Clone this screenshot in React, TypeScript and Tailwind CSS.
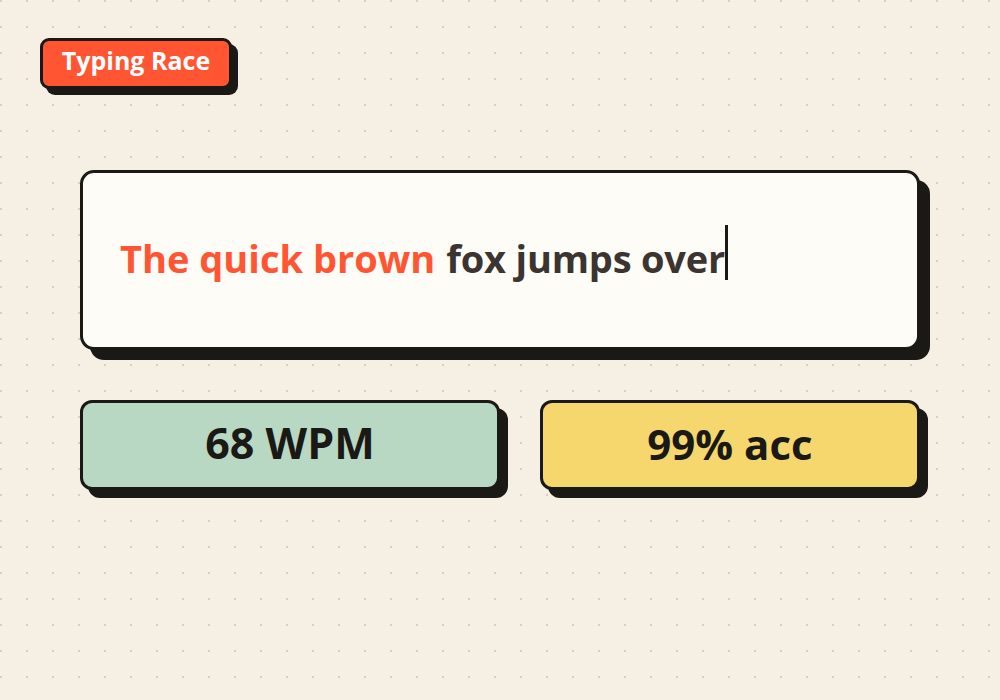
import React from 'react';

const font = { fontFamily: '"Open Sans", "Noto Sans", sans-serif' };

export default function App() {
  return (
    <div
      className="w-[1000px] h-[700px] bg-[#f5efe4] bg-[radial-gradient(circle_at_1px_1px,#d8cfc0_1px,transparent_0)] bg-[length:26px_26px] px-10 pt-[38px]"
      style={font}
    >
      <div className="inline-flex h-[51px] w-[192px] items-center justify-center rounded-[9px] border-[3px] border-[#1b1915] bg-[#ff5533] pb-[5px] text-[25px] font-bold text-white shadow-[6px_6px_0_#1b1915]">
        Typing Race
      </div>

      <div className="mx-10 mt-[81px] flex flex-col gap-[50px]">
        <div className="flex h-[180px] items-center rounded-[14px] border-[3px] border-[#1b1915] bg-[#fdfcf7] px-[37px] pb-[4px] shadow-[10px_10px_0_#1b1915]">
          <p className="flex items-center text-[38px] font-bold leading-none">
            <span className="text-[#ff5533]">The quick brown</span>
            <span className="ml-[11px] tracking-[-0.2px] text-[#3b3430]">fox jumps over</span>
            {/* caret */}
            <span className="mb-[12px] h-[55px] w-[3px] bg-[#1b1915]" />
          </p>
        </div>

        <div className="flex gap-10">
          <div className="flex h-[90px] w-[420px] items-center justify-center rounded-[12px] border-[3px] border-[#1b1915] bg-[#b9d8c3] pb-1 text-[43px] font-bold text-[#1b1915] shadow-[8px_8px_0_#1b1915]">
            68 WPM
          </div>
          <div className="flex h-[90px] flex-1 items-center justify-center rounded-[12px] border-[3px] border-[#1b1915] bg-[#f5d76e] pb-1 text-[42px] font-bold text-[#1b1915] shadow-[8px_8px_0_#1b1915]">
            99% acc
          </div>
        </div>
      </div>
    </div>
  );
}
